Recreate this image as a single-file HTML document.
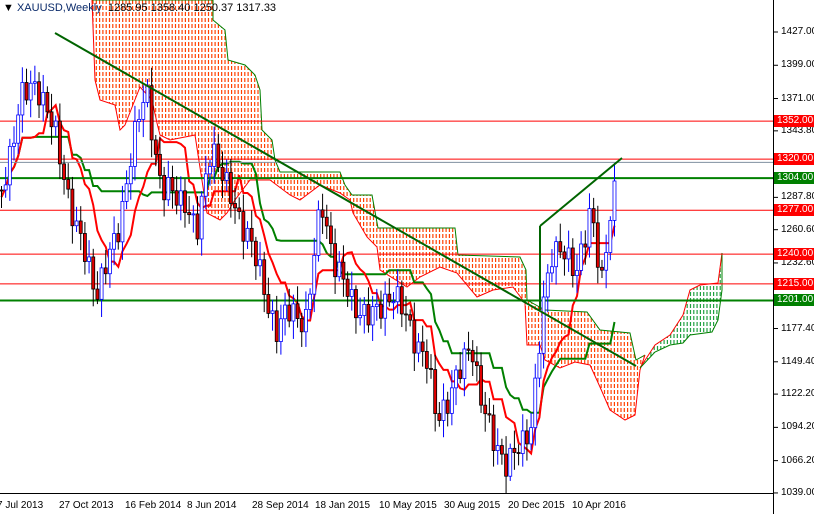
<!DOCTYPE html><html><head><style>
html,body{margin:0;padding:0;background:#fff;width:814px;height:514px;overflow:hidden;font-family:"Liberation Sans",sans-serif}
#c{position:absolute;left:0;top:0}
.t{position:absolute;font-size:10px;color:#000;white-space:nowrap}
.lab{position:absolute;left:774px;width:40px;height:12px;font-size:10px;color:#fff;line-height:12px;padding-left:3px}
</style></head><body>
<svg id="c" width="814" height="514" xmlns="http://www.w3.org/2000/svg">
<defs>
<clipPath id="ca"><polygon id="pa"/></clipPath>
<clipPath id="cb"><polygon id="pb"/></clipPath>
</defs>
<g id="cloud"></g><g id="lines"></g><g id="cand"></g><g id="top"></g>
<line x1="773.5" y1="0" x2="773.5" y2="514" stroke="#000"/>
<line x1="0" y1="493.5" x2="773" y2="493.5" stroke="#000"/>
<g id="ticks"></g>
</svg>
<div class="t" style="left:3px;top:2px;font-size:11px">▼ <span style="color:#0a2a6a">XAUUSD,Weekly</span> &nbsp;1285.95 1358.40 1250.37 1317.33</div>
<div id="ax"></div>
<script>
const Y=p=>32+(1427-p)*1.188;
const kp=[[0,190],[20,100],[35,80],[55,140],[75,230],[95,290],[115,240],[130,150],[145,90],[160,190],[185,200],[195,240],[210,140],[225,190],[245,230],[260,280],[275,330],[290,310],[305,320],[320,200],[335,270],[350,300],[370,320],[390,290],[410,330],[425,360],[435,420],[445,400],[460,370],[470,340],[480,400],[490,440],[505,460],[520,450],[530,420],[540,320],[550,260],[560,240],[575,280],[590,200],[600,290],[610,210],[616,170]];
function f(x){for(let i=1;i<kp.length;i++)if(x<=kp[i][0]){const a=kp[i-1],b=kp[i];return a[1]+(b[1]-a[1])*(x-a[0])/(b[0]-a[0]);}return 170;}
const dx=4.17,N=Math.floor(616/dx)+1,C=[];
for(let i=0;i<N;i++){const x=i*dx;const c=f(x)+Math.sin(i*2.3)*12+Math.sin(i*0.9)*6;C.push({x,c,o:i?C[i-1].c:c});}
C.forEach((d,i)=>{d.h=Math.min(d.o,d.c)-4-Math.abs(Math.sin(i*1.7))*14;d.l=Math.max(d.o,d.c)+4+Math.abs(Math.cos(i*1.3))*14;});
let s='';
C.forEach(d=>{const up=d.c<d.o;const col=up?'#0000ff':'#000';s+=`<line x1="${d.x+1.5}" y1="${d.h}" x2="${d.x+1.5}" y2="${d.l}" stroke="${col}"/>`;
s+=`<rect x="${d.x}" y="${Math.min(d.o,d.c)}" width="3" height="${Math.max(1,Math.abs(d.c-d.o))}" fill="${up?'#fff':'#e00000'}" stroke="${col}" stroke-width="0.8"/>`;});
document.getElementById('cand').innerHTML=s;
function mid(i,n){let hi=1e9,lo=-1e9;for(let k=Math.max(0,i-n+1);k<=i;k++){hi=Math.min(hi,C[k].h);lo=Math.max(lo,C[k].l);}return (hi+lo)/2;}
const T=C.map((d,i)=>mid(i,9)),K=C.map((d,i)=>mid(i,26));
const pl=a=>a.map((v,i)=>`${(C[i].x+1.5).toFixed(1)},${v.toFixed(1)}`).join(' ');
let L='';
L+=`<polyline points="${pl(K)}" fill="none" stroke="#008000" stroke-width="2"/>`;
L+=`<polyline points="${pl(T)}" fill="none" stroke="#f00" stroke-width="2"/>`;
const topA="92,0 213,0 213,20 225,30 228,60 245,65 255,75 260,90 262,130 272,140 275,160 280,172 340,172 345,185 352,195 372,195 378,228 455,228 458,255 520,257 526,270 527,300 545,310 587,312 600,330 630,333 636,360 645,355";
const botA="92,0 95,80 100,100 115,105 120,130 125,125 140,87 152,100 157,123 160,135 170,140 195,135 207,213 220,220 227,213 235,200 250,180 270,180 290,195 300,200 320,185 340,193 350,200 353,213 367,237 377,247 380,270 407,287 420,277 440,267 457,273 477,297 493,290 513,287 525,303 527,345 540,345 545,360 560,368 575,362 590,365 600,387 610,410 625,420 635,415 640,370 645,355";
const topB="640,368 655,345 670,335 683,315 690,290 700,285 718,283 722,253";
const botB="640,368 655,352 670,345 683,343 690,335 712,332 718,320 722,290 722,253";
const rev=s=>s.split(' ').reverse().join(' ');
document.getElementById('pa').setAttribute('points',topA+' '+rev(botA));
document.getElementById('pb').setAttribute('points',topB+' '+rev(botB));
let cl='<g clip-path="url(#ca)">';
for(let x=93;x<650;x+=3.3)cl+=`<line x1="${x}" y1="0" x2="${x}" y2="430" stroke="#ff4000" stroke-width="1.2" stroke-dasharray="4,2"/>`;
cl+='</g><g clip-path="url(#cb)">';
for(let x=641;x<724;x+=3.3)cl+=`<line x1="${x}" y1="250" x2="${x}" y2="370" stroke="#20a040" stroke-width="1.2" stroke-dasharray="4,2"/>`;
cl+='</g>';
cl+=`<polyline points="${topA}" fill="none" stroke="#008000"/><polyline points="${botA}" fill="none" stroke="#f00"/>`;
cl+=`<polyline points="${topB}" fill="none" stroke="#f00"/><polyline points="${botB}" fill="none" stroke="#008000"/>`;
document.getElementById('cloud').innerHTML=cl;
const H=[[1352,'#f00',1],[1320,'#f00',1],[1317.3,'#8090a0',1],[1304,'#008000',2],[1277,'#f00',1],[1240,'#f00',1],[1215,'#f00',1],[1201,'#008000',2]];
H.forEach(h=>{L+=`<line x1="0" x2="773" y1="${Y(h[0])}" y2="${Y(h[0])}" stroke="${h[1]}" stroke-width="${h[2]}"/>`;});
document.getElementById('lines').innerHTML=L;
document.getElementById('top').innerHTML=`<line x1="55" y1="33" x2="636" y2="366" stroke="#006400" stroke-width="2"/><line x1="540" y1="226" x2="622" y2="158" stroke="#006400" stroke-width="2"/><line x1="540" y1="226" x2="540" y2="310" stroke="#006400" stroke-width="2"/>`;
let ax='',tk='';
[[1427,'1427.00'],[1399,'1399.00'],[1371,'1371.00'],[1343.8,'1343.80'],[1287.8,'1287.80'],[1260.6,'1260.60'],[1232.6,'1232.60'],[1177.4,'1177.40'],[1149.4,'1149.40'],[1122.2,'1122.20'],[1094.2,'1094.20'],[1066.2,'1066.20'],[1039,'1039.00']].forEach(v=>{ax+=`<div class="t" style="left:781px;top:${Y(v[0])-6}px">${v[1]}</div>`;tk+=`<line x1="774" x2="778" y1="${Y(v[0])}" y2="${Y(v[0])}" stroke="#000"/>`;});
document.getElementById('ticks').innerHTML=tk;
H.forEach(h=>{if(h[1]!='#8090a0')ax+=`<div class="lab" style="top:${Y(h[0])-6}px;background:${h[1]=='#f00'?'#f00':'#008000'}">${h[0].toFixed(2)}</div>`;});
[[0,'7 Jul 2013'],[62,'27 Oct 2013'],[128,'16 Feb 2014'],[190,'8 Jun 2014'],[255,'28 Sep 2014'],[318,'18 Jan 2015'],[382,'10 May 2015'],[447,'30 Aug 2015'],[511,'20 Dec 2015'],[575,'10 Apr 2016']].forEach(d=>{ax+=`<div class="t" style="left:${d[0]-3}px;top:500px">${d[1]}</div>`;});
document.getElementById('ax').innerHTML=ax;
</script>
</body></html>
